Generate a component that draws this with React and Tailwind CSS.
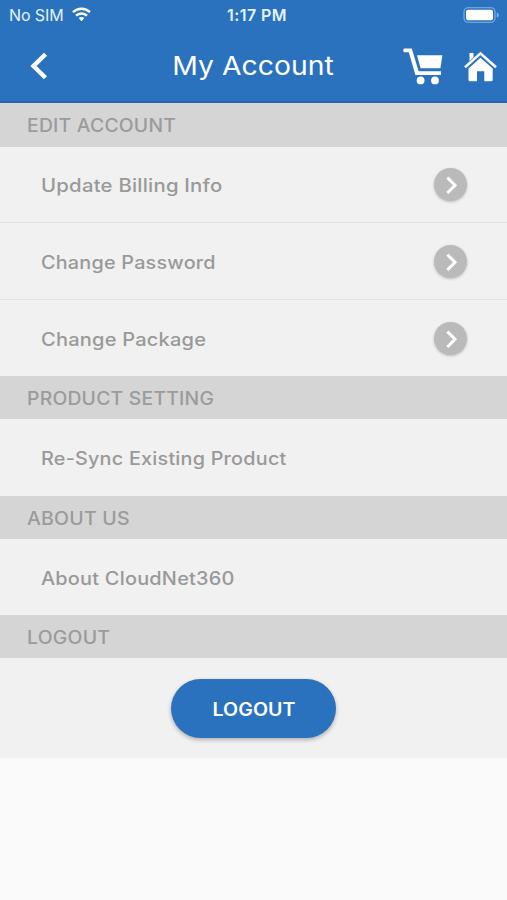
function Section({ children, className, stretch }) {
  return (
    <div className={`flex items-center bg-[#d5d5d5] pl-[26.5px] pt-px text-[18px] font-medium tracking-[0.2px] whitespace-nowrap text-[#9b9b9b] ${className}`}>
      <span className={`origin-left ${stretch}`}>{children}</span>
    </div>
  );
}

function Row({ children, arrow, className, stretch }) {
  return (
    <div className={`flex items-center justify-between pr-[40px] pl-[41px] text-[18px] font-medium tracking-[0.2px] whitespace-nowrap text-[#999999] ${className}`}>
      <span className={`origin-left pt-[2px] ${stretch}`}>{children}</span>
      {arrow && (
        <span className="flex size-[33px] items-center justify-center rounded-full bg-[#bababa] shadow-[0_1px_3px_rgba(0,0,0,0.22)]">
          <svg width="33" height="33" viewBox="0 0 33 33" fill="none">
            <path d="M13.4 9.6L21 17.3L13.4 25" stroke="#fff" strokeWidth="3" />
          </svg>
        </span>
      )}
    </div>
  );
}

export default function App() {
  return (
    <div className="flex h-[900px] w-[507px] flex-col overflow-hidden bg-[#fafafa] font-['Inter',sans-serif]">
      <header className="flex h-[103px] shrink-0 flex-col border-b-2 border-[#2563a6] bg-[#2a72be] text-white">
        <div className="grid h-[30px] grid-cols-3 items-center pr-[7px] pl-[9px] leading-none text-[#e4f3ff]">
          <div className="flex items-center gap-[8px]">
            <span className="text-[16px] tracking-[-0.1px]">No SIM</span>
            <svg width="19" height="15" viewBox="0 0 19 15" fill="none" stroke="#fff" strokeWidth="2.5" className="-translate-y-px">
              <path d="M1 5.2C5.8.6 13.2.6 18 5.2" />
              <path d="M4 8.7C7.2 5.7 11.8 5.7 15 8.7" />
              <path d="M6.7 11L9.5 14.2L12.3 11C10.7 9.5 8.3 9.5 6.7 11Z" fill="#fff" stroke="none" />
            </svg>
          </div>
          <span className="justify-self-center pb-px pl-[5px] text-[16px] font-semibold tracking-[0.4px]">1:17 PM</span>
          <svg className="justify-self-end" width="37" height="16" viewBox="0 0 37 16">
            <rect x="1" y=".8" width="31" height="14.4" rx="4" fill="none" stroke="#86b3e2" strokeWidth="1.1" />
            <rect x="3" y="2.7" width="27" height="10.6" rx="2" fill="#fff" />
            <path d="M33.8 5.4C36.4 6.3 36.4 9.7 33.8 10.6Z" fill="#86b3e2" />
          </svg>
        </div>
        <div className="grid h-[71px] grid-cols-[133px_1fr_133px] items-center pr-[10px] pl-[10px]">
          <svg className="ml-[20px]" width="18" height="28" viewBox="0 0 18 28" fill="none">
            <path d="M15.5 2.2L3.5 14L15.5 25.8" stroke="#fff" strokeWidth="4.4" />
          </svg>
          <h1 className="origin-center scale-x-[1.09] justify-self-center pt-px text-[26px] leading-none">My Account</h1>
          <div className="flex items-center justify-end gap-[20px]">
            <svg width="40" height="38" viewBox="0 0 40 38" fill="#fff" className="-translate-x-px">
              <path d="M1.5 1.5H8.8L15.6 24.2H38V28H12.4L5.8 5.2H1.5Q.2 5.2 .2 3.4Q.2 1.5 1.5 1.5Z" />
              <path d="M14 8.2H39.4L37.4 21.2H17.6Z" />
              <circle cx="17.6" cy="33.4" r="3.9" />
              <circle cx="32" cy="33.4" r="3.9" />
            </svg>
            <svg width="33" height="32" viewBox="0 0 33 32" fill="#fff">
              <path d="M5.5 3H9.5V7L5.5 11Z" />
              <path d="M1 17.2L16.5 3.4L32 17.2" fill="none" stroke="#fff" strokeWidth="2.6" />
              <path d="M16.5 7.8L28.7 18.6V29.8Q28.7 31.3 27.2 31.3H20.3V21.3H13V31.3H6Q4.5 31.3 4.5 29.8V18.6Z" />
            </svg>
          </div>
        </div>
      </header>
      <main className="flex flex-col bg-[#f1f1f1]">
        <Section className="h-[44px]" stretch="scale-x-[1.075]">EDIT ACCOUNT</Section>
        <Row arrow className="h-[76px] border-b border-[#e3e3e3]" stretch="scale-x-[1.13]">Update Billing Info</Row>
        <Row arrow className="h-[77px] border-b border-[#e3e3e3]" stretch="scale-x-[1.1]">Change Password</Row>
        <Row arrow className="h-[76px]" stretch="scale-x-[1.112]">Change Package</Row>
        <Section className="h-[43px]" stretch="scale-x-[1.075]">PRODUCT SETTING</Section>
        <Row className="h-[77px]" stretch="scale-x-[1.10]">Re-Sync Existing Product</Row>
        <Section className="h-[43px]" stretch="scale-x-[1.085]">ABOUT US</Section>
        <Row className="h-[76px]" stretch="scale-x-[1.106]">About CloudNet360</Row>
        <Section className="h-[43px]" stretch="scale-x-[1.08]">LOGOUT</Section>
        <div className="flex h-[100px] items-start justify-center pt-[21px]">
          <button className="flex h-[59px] w-[165px] items-center justify-center rounded-full bg-[#2a72be] pt-[2px] text-[18px] font-semibold text-white shadow-[0_2px_4px_rgba(0,0,0,0.28)]">
            <span className="scale-x-[1.09]">LOGOUT</span>
          </button>
        </div>
      </main>
    </div>
  );
}
